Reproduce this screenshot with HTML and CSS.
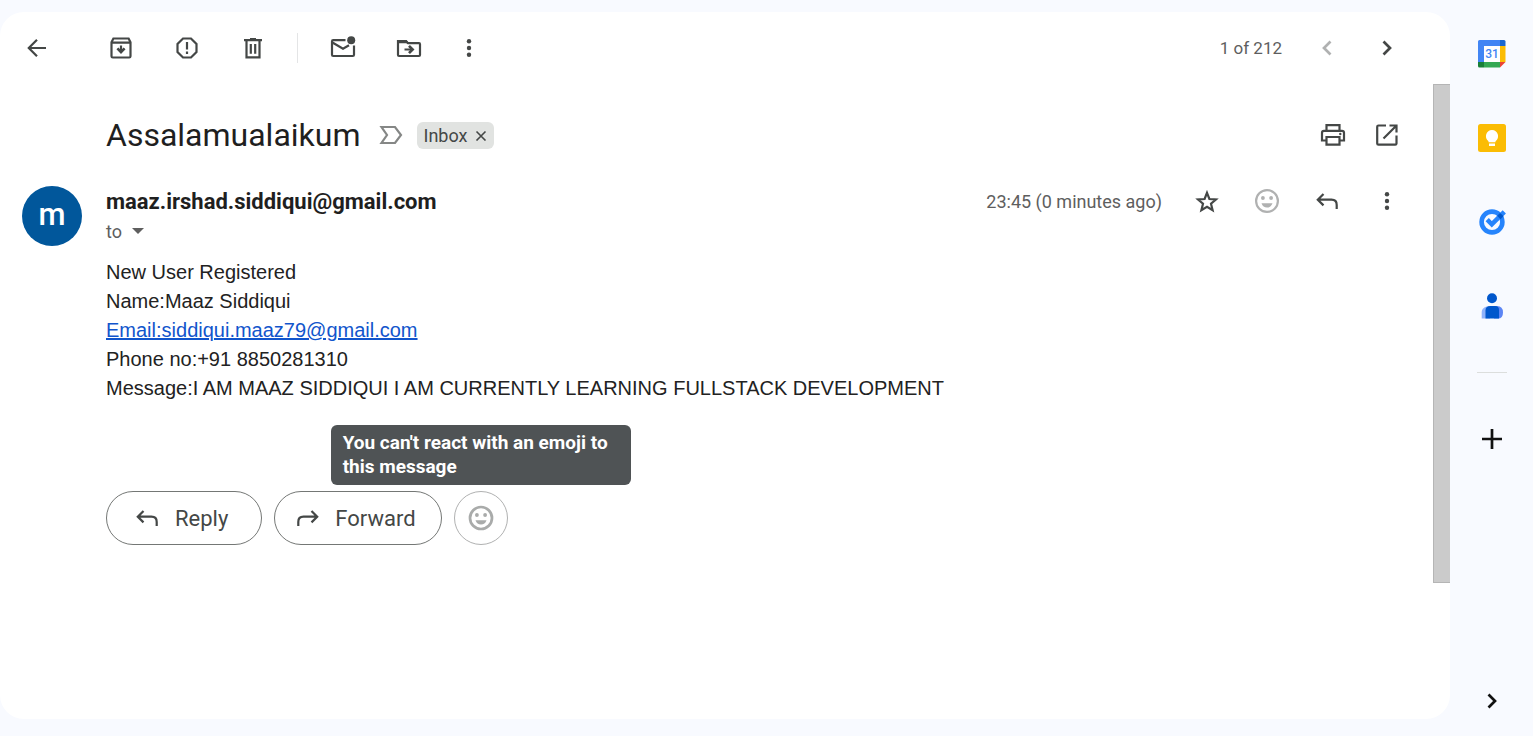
FILE: index.html
```html
<!DOCTYPE html>
<html lang="en">
<head>
<meta charset="utf-8">
<title>Assalamualaikum</title>
<link rel="stylesheet" href="styles.css">
</head>
<body>
<div class="app">
  <main class="card">
    <header class="toolbar">
      <button class="icon-btn back" aria-label="Back to inbox"><svg class="icon" viewBox="0 0 30 30"><path class="line" d="M24 15H7.5M15 6.8L6.8 15L15 23.2"/></svg></button>
      <div class="actions">
        <button class="icon-btn" aria-label="Archive"><svg class="icon" viewBox="0 0 30 30"><path class="line" d="M5.5 9.2L7.4 5.5H22.6L24.5 9.2V23.2Q24.5 24.5 23.2 24.5H6.8Q5.5 24.5 5.5 23.2ZM5.5 9.6H24.5M15 12.6V18.5"/><path class="line heavy" d="M11.4 15.4L15 19L18.6 15.4"/></svg></button>
        <button class="icon-btn" aria-label="Report spam"><svg class="icon" viewBox="0 0 30 30"><path class="line" d="M11 5.5H19L24.5 11V19L19 24.5H11L5.500 19V11ZM15 9V16.500M15 18.600V21"/></svg></button>
        <button class="icon-btn" aria-label="Delete"><svg class="icon" viewBox="0 0 30 30"><path class="line" d="M6 7.2H24M12 6.2H18M8.5 8V24.3H21.5V8M12.8 11V20.8M17.2 11V20.8"/></svg></button>
      </div>
      <span class="separator"></span>
      <div class="actions">
        <button class="icon-btn" aria-label="Mark as unread"><svg class="icon" viewBox="0 0 30 30"><path class="line" d="M17.5 7.2H5.2Q4 7.2 4 8.4V21.8Q4 23 5.2 23H24.8Q26 23 26 21.8V12.5M4 9.200L15 15.800L21 12.200"/><circle class="solid" cx="23.200" cy="7.200" r="4"/></svg></button>
        <button class="icon-btn" aria-label="Move to"><svg class="icon" viewBox="0 0 30 30"><path class="line" d="M4 22V8.2H12L14 10.2H25Q26 10.2 26 11.2V22Q26 23 25 23H5Q4 23 4 22ZM10.500 16.500H18"/><path class="line heavy" d="M15 12.900L18.600 16.500L15 20.100"/><path class="solid" d="M4 7H12.4L15.2 10.2H4Z"/></svg></button>
      </div>
      <button class="icon-btn more" aria-label="More"><svg class="icon" viewBox="0 0 30 30"><g class="solid"><circle cx="15" cy="8.3" r="2.2"/><circle cx="15" cy="15" r="2.2"/><circle cx="15" cy="21.7" r="2.2"/></g></svg></button>
      <div class="pager">
        <span class="count muted">1 of 212</span>
        <button class="icon-btn faded" aria-label="Newer" disabled><svg class="icon" viewBox="0 0 30 30"><path class="line heavy" d="M18.5 8.5L12 15L18.5 21.5"/></svg></button>
        <button class="icon-btn" aria-label="Older"><svg class="icon" viewBox="0 0 30 30"><path class="line heavy" d="M11.5 8.5L18 15L11.5 21.5"/></svg></button>
      </div>
    </header>

    <div class="viewport">
      <article class="thread">
        <div class="subject-row">
          <h1 class="subject">Assalamualaikum</h1>
          <button class="icon-btn marker" aria-label="Mark as important"><svg class="icon" viewBox="0 0 30 30"><path class="line" d="M6.500 7H20L26 15L20 23H6.500L12 15Z"/></svg></button>
          <span class="chip">Inbox <button class="chip-x" aria-label="Remove label Inbox"><svg viewBox="0 0 12 12"><path class="line" d="M1.500 2.500L10.500 11.500M10.500 2.500L1.500 11.500"/></svg></button></span>
          <div class="subject-tools">
            <button class="icon-btn" aria-label="Print"><svg class="icon" viewBox="0 0 30 30"><path class="line" d="M8.5 10.5V5.2H21.5V10.5M8.5 20.5H4V12.8Q4 10.8 6 10.8H24Q26 10.8 26 12.8V20.5H21.5M8.5 17H21.5V24.6H8.5Z"/><circle class="solid" cx="22.3" cy="14" r="1.2"/></svg></button>
            <button class="icon-btn" aria-label="Open in new window"><svg class="icon" viewBox="0 0 30 30"><path class="line" d="M14 5.5H6.5Q5.2 5.5 5.2 6.8V23.4Q5.2 24.7 6.5 24.7H23.2Q24.5 24.7 24.5 23.4V15.5M17.5 5.5H24.5V12.5M24 6L11.5 18.5"/></svg></button>
          </div>
        </div>

        <div class="message">
          <div class="avatar">m</div>
          <div class="message-main">
            <div class="sender-row">
              <span class="sender">maaz.irshad.siddiqui@gmail.com</span>
              <div class="meta">
                <span class="muted">23:45 (0 minutes ago)</span>
                <button class="icon-btn" aria-label="Star"><svg class="icon" viewBox="0 0 30 30"><path class="line" d="M15 6.8L17.4 13L24 13.5L19 17.7L20.6 24.2L15 20.7L9.4 24.2L11 17.7L6 13.5L12.6 13Z"/></svg></button>
                <button class="icon-btn faded" aria-label="Add reaction" disabled><svg class="icon" viewBox="0 0 30 30"><circle class="line" cx="15" cy="15" r="10.9"/><g class="solid"><circle cx="10.9" cy="12" r="1.9"/><circle cx="19.1" cy="12" r="1.9"/><path d="M9.5 17.3H20.5Q19 21.6 15 21.6Q11 21.6 9.5 17.3Z"/></g></svg></button>
                <button class="icon-btn" aria-label="Reply to sender"><svg class="icon" viewBox="0 0 30 30"><path class="line" d="M11.5 8L5.8 13.7L11.5 19.4M6.5 13.7H19.5Q24.7 13.7 24.7 18.9V23"/></svg></button>
                <button class="icon-btn" aria-label="More options"><svg class="icon" viewBox="0 0 30 30"><g class="solid"><circle cx="15" cy="8.3" r="2.2"/><circle cx="15" cy="15" r="2.2"/><circle cx="15" cy="21.7" r="2.2"/></g></svg></button>
              </div>
            </div>
            <div class="recipient muted">to <button class="caret" aria-label="Show details"><svg viewBox="0 0 12 6"><path class="solid" d="M0 0H12L6 6Z"/></svg></button></div>
            <div class="body-text">
              New User Registered<br>
              Name:Maaz Siddiqui<br>
              <a href="mailto:siddiqui.maaz79@gmail.com">Email:siddiqui.maaz79@gmail.com</a><br>
              Phone no:+91 8850281310<br>
              Message:I AM MAAZ SIDDIQUI I AM CURRENTLY LEARNING FULLSTACK DEVELOPMENT
            </div>
            <div class="replies">
              <button class="pill"><svg class="icon" viewBox="0 0 30 30"><path class="line" d="M11.5 8L5.8 13.7L11.5 19.4M6.5 13.7H19.5Q24.7 13.7 24.7 18.9V23"/></svg>Reply</button>
              <button class="pill snug"><svg class="icon" viewBox="0 0 30 30"><path class="line" d="M19.500 8L25.200 13.700L19.500 19.400M24.500 13.700H11.500Q6.300 13.700 6.300 18.900V23"/></svg>Forward</button>
              <div class="react">
                <button class="pill round" aria-label="Add reaction" aria-describedby="react-tip" disabled><svg class="icon" viewBox="0 0 30 30"><circle class="line heavy" cx="15" cy="15" r="11"/><g class="solid"><circle cx="10.9" cy="12" r="1.9"/><circle cx="19.1" cy="12" r="1.9"/><path d="M9.5 17.3H20.5Q19 21.6 15 21.6Q11 21.6 9.5 17.3Z"/></g></svg></button>
                <div class="tooltip" role="tooltip" id="react-tip">You can't react with an emoji to this message</div>
              </div>
            </div>
          </div>
        </div>
      </article>
      <div class="track"><div class="thumb"></div></div>
    </div>
  </main>

  <aside class="side">
    <button class="side-btn" aria-label="Calendar"><svg class="icon" viewBox="0 0 30 30"><path fill="#4285f4" d="M2.5 1H23V7H7V23H1V2.5Q1 1 2.5 1Z"/><path fill="#1967d2" d="M23 1H27Q28.500 1 28.500 2.500V7H23Z"/><path fill="#fbbc04" d="M23 7H28.500V23H23Z"/><path fill="#34a853" d="M7 23H23V28.500H7Z"/><path fill="#188038" d="M1 23H7V28.500H2.500Q1 28.500 1 27Z"/><path fill="#ea4335" d="M23 23H28.500L23 28.500Z"/><path fill="#fff" d="M7 7H23V23H7Z"/><text class="cal-day" x="15" y="19" text-anchor="middle">31</text></svg></button>
    <button class="side-btn" aria-label="Keep"><svg class="icon" viewBox="0 0 30 30"><rect x="1" y="1" width="28" height="28" rx="2.500" fill="#fbbc04"/><path fill="#fff" d="M15 7A6.200 6.200 0 0 1 18.500 18.200V19.200H11.500V18.200A6.200 6.200 0 0 1 15 7ZM12 20.600H18V23H12Z"/></svg></button>
    <button class="side-btn" aria-label="Tasks"><svg class="icon" viewBox="0 0 30 30"><circle cx="15" cy="15" r="10.400" fill="none" stroke="#2684fc" stroke-width="4.600"/><path fill="none" stroke="#2684fc" stroke-width="4.600" d="M10.200 12.700L14.800 17.300L27.300 4.800"/><path fill="#0057cc" d="M20.200 8.700L23 5.900Q25.500 7.500 26.500 9.200L23.500 12.200L20.200 8.700Z"/></svg></button>
    <button class="side-btn" aria-label="Contacts"><svg class="icon" viewBox="0 0 30 30"><path fill="#8fb2fb" d="M9.500 15.500H13V27.500H4.700V21Q4.700 17 9.500 15.500Z"/><path fill="#5c85f5" d="M17 15H20Q26 15 26 21.500Q26 27.500 21 27.500H17Z"/><path fill="#0057cc" d="M13 15H18Q22 15 22 19V27.500H8.500V19.500Q8.500 15 13 15Z"/><circle cx="15" cy="7.300" r="5" fill="#0057cc"/></svg></button>
    <span class="side-rule"></span>
    <button class="side-btn dark" aria-label="Get add-ons"><svg class="icon" viewBox="0 0 30 30"><path class="line heavy" d="M15 5V25M5 15H25"/></svg></button>
    <button class="side-btn dark hide" aria-label="Hide side panel"><svg class="icon" viewBox="0 0 30 30"><path class="line heavy" d="M11.500 8.500L18 15L11.500 21.500"/></svg></button>
  </aside>
</div>
</body>
</html>
```

FILE: styles.css
```css
* { box-sizing: border-box; }

body {
  margin: 0;
  background: #f8faff;
  color: #1f1f1f;
  font-family: Roboto, "Open Sans", sans-serif;
  font-size: 18px;
}

button {
  margin: 0;
  padding: 0;
  border: 0;
  background: none;
  color: inherit;
  font: inherit;
}

.app {
  display: flex;
  min-height: 100vh;
  padding: 12px 0 17px;
}

.card {
  display: flex;
  flex: 1;
  flex-direction: column;
  min-width: 0;
  overflow: hidden;
  border-radius: 24px;
  background: #fff;
}

.icon {
  display: block;
  width: 30px;
  height: 30px;
}

.line {
  fill: none;
  stroke: currentColor;
  stroke-width: 2.2;
}

.heavy { stroke-width: 2.7; }

.solid { fill: currentColor; }

.icon-btn {
  flex: none;
  color: #444746;
}

.faded { color: #b0b1b1; }

.muted { color: #5e5e5e; }

/* Toolbar */
.toolbar {
  display: flex;
  align-items: center;
  height: 72px;
  padding: 0 48px 0 22px;
}

.back { margin-right: 54px; }

.actions {
  display: flex;
  gap: 36px;
}

.separator {
  width: 1px;
  height: 30px;
  margin: 0 30px 0 29px;
  background: #e4e5e6;
}

.more { margin-left: 30px; }

.pager {
  display: flex;
  align-items: center;
  gap: 30px;
  margin-left: auto;
}

.count { font-size: 17px; }

/* Conversation */
.viewport {
  display: flex;
  flex: 1;
}

.thread {
  flex: 1;
  min-width: 0;
  padding: 27px 31px 24px 22px;
}

.track {
  flex: none;
  width: 17px;
}

.thumb {
  height: 78.6%;
  border: 1px solid #b5b5b5;
  border-right: 0;
  background: #cbcbcb;
}

.subject-row {
  display: flex;
  align-items: center;
  height: 48px;
  padding-left: 84px;
}

.subject {
  margin: 0;
  font-size: 32px;
  font-weight: 400;
}

.marker {
  margin: 0 12px 0 14px;
  color: #858786;
}

.chip {
  display: flex;
  align-items: center;
  gap: 8px;
  height: 27px;
  padding: 0 7px;
  border-radius: 6px;
  background: #e1e3e1;
  color: #444746;
}

.chip-x svg {
  display: block;
  width: 12px;
  height: 12px;
}

.chip-x .line { stroke-width: 1.6; }

.subject-tools {
  display: flex;
  gap: 24px;
  margin-left: auto;
}

.message {
  display: flex;
  gap: 24px;
  margin-top: 27px;
}

.avatar {
  display: grid;
  flex: none;
  place-items: center;
  width: 60px;
  height: 60px;
  padding-bottom: 3px;
  border-radius: 50%;
  background: #01579b;
  color: #fff;
  font-size: 31px;
  font-weight: 500;
}

.message-main {
  flex: 1;
  min-width: 0;
}

.sender-row {
  display: flex;
  align-items: center;
  justify-content: space-between;
  height: 30px;
}

.sender {
  font-size: 22px;
  font-weight: 700;
}

.meta {
  display: flex;
  align-items: center;
  gap: 30px;
}

.recipient {
  display: flex;
  align-items: center;
  gap: 10px;
  height: 30px;
}

.caret svg {
  display: block;
  width: 12px;
  height: 6px;
}

.body-text {
  margin-top: 12px;
  color: #222;
  font-family: "Liberation Sans", Arial, sans-serif;
  font-size: 20px;
  line-height: 29px;
}

.body-text a { color: #1155cc; }

.replies {
  display: flex;
  gap: 12px;
  margin-top: 88px;
}

.pill {
  display: flex;
  align-items: center;
  gap: 13px;
  height: 54px;
  padding: 0 33px 0 25px;
  border: 1px solid #747775;
  border-radius: 27px;
  color: #444746;
  font-size: 22px;
}

.snug { padding: 0 25px 0 17px; }

.round {
  justify-content: center;
  width: 54px;
  padding: 0;
  border-color: #b0b1b1;
  color: #a9abaa;
}

.react { position: relative; }

.tooltip {
  position: absolute;
  bottom: 60px;
  left: 50%;
  width: 300px;
  margin-left: -150px;
  padding: 6px 12px;
  border-radius: 6px;
  background: #4f5355;
  color: #fff;
  font-size: 19px;
  font-weight: 700;
  line-height: 24px;
}

/* Side panel */
.side {
  display: flex;
  flex: none;
  flex-direction: column;
  align-items: center;
  gap: 54px;
  width: 83px;
  padding: 27px 0 3px;
}

.side-rule {
  width: 30px;
  height: 1px;
  margin: -3px 0;
  background: #dcdedd;
}

.dark { color: #111; }

.hide { margin-top: auto; }

.cal-day {
  fill: #4285f4;
  font-size: 12px;
  font-weight: 500;
}
```
